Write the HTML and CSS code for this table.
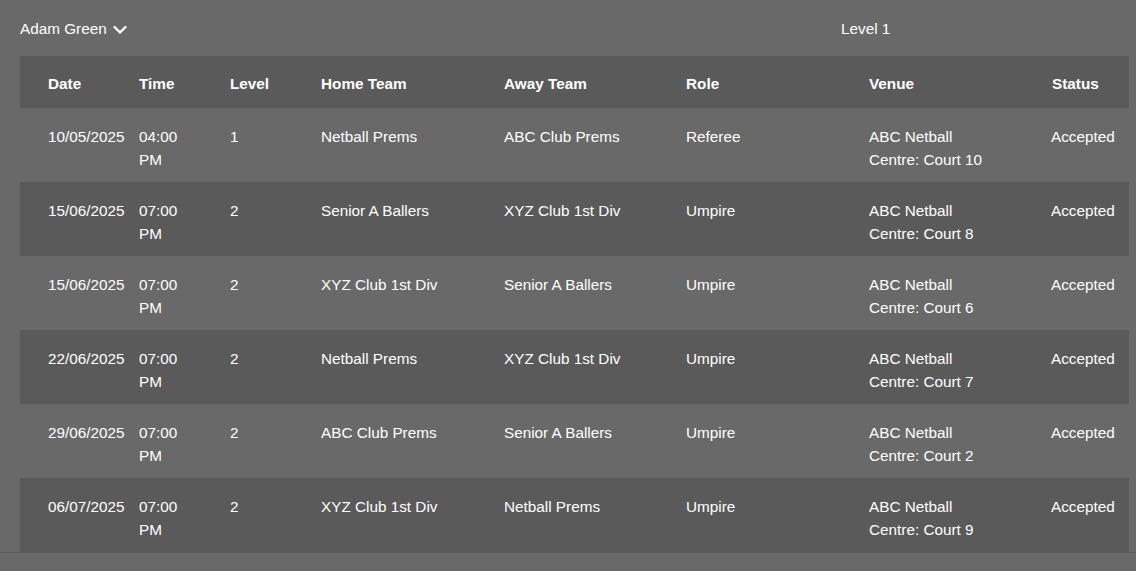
FILE: index.html
```html
<!DOCTYPE html>
<html>
<head>
<meta charset="utf-8">
<link rel="stylesheet" href="styles.css">
</head>
<body>
<div class="page">
  <div class="topbar">
    <div class="user">Adam Green
      <svg class="chev" width="14" height="10" viewBox="0 0 14 10"><polyline points="1.5,2 7,7.5 12.5,2" fill="none" stroke="#fff" stroke-width="2.4" stroke-linecap="round" stroke-linejoin="round"/></svg>
    </div>
    <div class="level">Level 1</div>
  </div>
  <div class="table">
    <div class="row head">
      <div>Date</div><div>Time</div><div>Level</div><div>Home Team</div><div>Away Team</div><div>Role</div><div>Venue</div><div>Status</div>
    </div>
    <div class="row">
      <div>10/05/2025</div><div class="time">04:00 PM</div><div>1</div><div>Netball Prems</div><div>ABC Club Prems</div><div>Referee</div><div class="venue">ABC Netball Centre: Court 10</div><div>Accepted</div>
    </div>
    <div class="row alt">
      <div>15/06/2025</div><div class="time">07:00 PM</div><div>2</div><div>Senior A Ballers</div><div>XYZ Club 1st Div</div><div>Umpire</div><div class="venue">ABC Netball Centre: Court 8</div><div>Accepted</div>
    </div>
    <div class="row">
      <div>15/06/2025</div><div class="time">07:00 PM</div><div>2</div><div>XYZ Club 1st Div</div><div>Senior A Ballers</div><div>Umpire</div><div class="venue">ABC Netball Centre: Court 6</div><div>Accepted</div>
    </div>
    <div class="row alt">
      <div>22/06/2025</div><div class="time">07:00 PM</div><div>2</div><div>Netball Prems</div><div>XYZ Club 1st Div</div><div>Umpire</div><div class="venue">ABC Netball Centre: Court 7</div><div>Accepted</div>
    </div>
    <div class="row">
      <div>29/06/2025</div><div class="time">07:00 PM</div><div>2</div><div>ABC Club Prems</div><div>Senior A Ballers</div><div>Umpire</div><div class="venue">ABC Netball Centre: Court 2</div><div>Accepted</div>
    </div>
    <div class="row alt">
      <div>06/07/2025</div><div class="time">07:00 PM</div><div>2</div><div>XYZ Club 1st Div</div><div>Netball Prems</div><div>Umpire</div><div class="venue">ABC Netball Centre: Court 9</div><div>Accepted</div>
    </div>
  </div>
  <div class="footer"></div>
</div>
</body>
</html>
```
FILE: styles.css
```css
* { box-sizing: border-box; }
html, body {
  margin: 0;
  padding: 0;
  background: #696969;
}
body {
  font-family: "Liberation Sans", Arial, sans-serif;
  font-size: 15.3px;
  color: #ffffff;
  height: 571px;
  overflow: hidden;
}
.page {
  display: flex;
  flex-direction: column;
}
.topbar {
  display: grid;
  grid-template-columns: 821px auto;
  align-items: center;
  height: 56px;
  padding: 2px 0 0 20px;
}
.user {
  display: flex;
  align-items: center;
  gap: 6px;
}
.chev { display: block; margin-top: 1px; }
.table {
  margin: 0 7px 0 20px;
}
.row {
  display: grid;
  grid-template-columns: 91px 91px 91px 183px 182px 183px 182px 1fr;
  padding: 17px 0 11px 28px;
  line-height: 23px;
  height: 74px;
}
.row.head {
  background: #5a5a5a;
  font-weight: bold;
  height: 52px;
  padding: 2px 0 0 28px;
  align-items: center;
}
.row.head > div:last-child { padding-left: 1px; }
.row.alt { background: #5a5a5a; }
.time { max-width: 50px; }
.venue { max-width: 125px; }
.footer {
  border-top: 1px solid #5c5c5c;
  height: 20px;
}
```
